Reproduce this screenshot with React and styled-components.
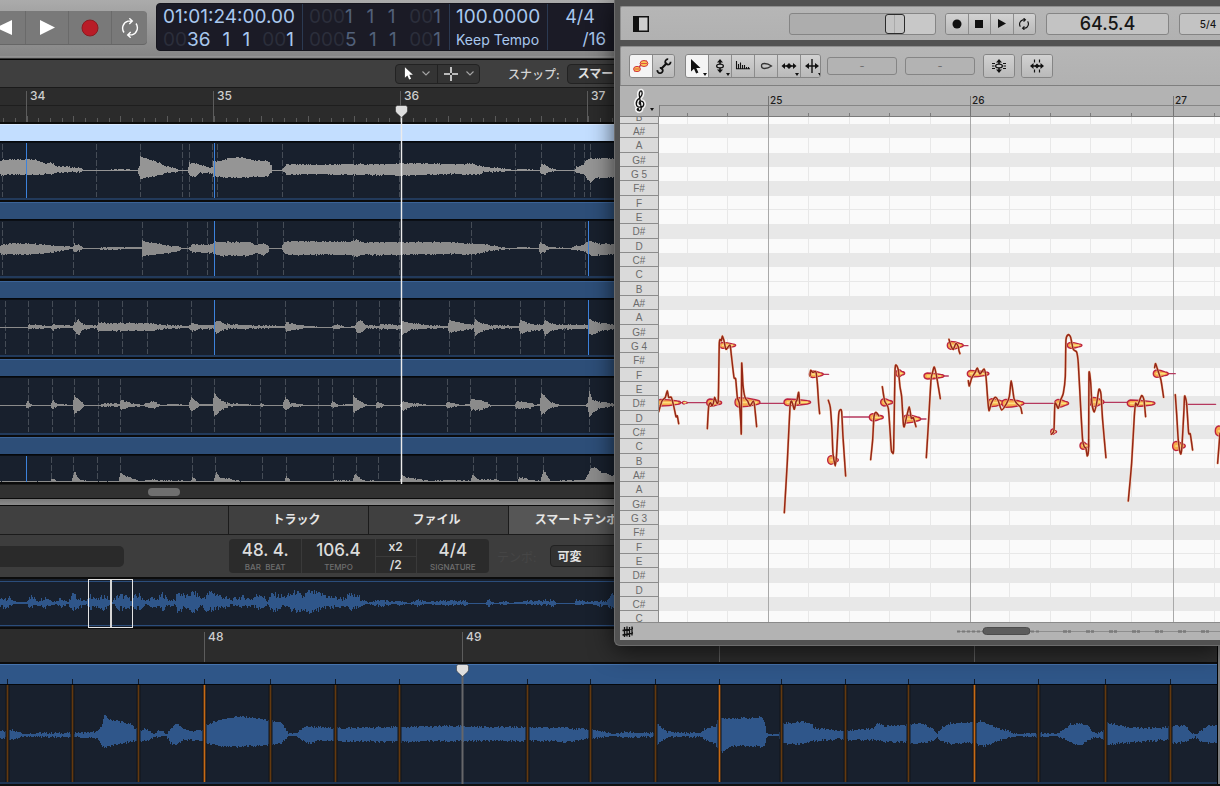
import React from 'react';
import styled, { createGlobalStyle, css } from 'styled-components';

const GlobalStyle = createGlobalStyle`
  * {
    box-sizing: border-box;
  }

  body {
    margin: 0;
    overflow: hidden;
    background: #101010;
    font-family: Inter, 'Noto Sans CJK JP', sans-serif;
  }

  button,
  input,
  select {
    margin: 0;
    padding: 0;
    border: 0;
    background: none;
    color: inherit;
    font: inherit;
  }
`;

/* ---------- data ---------- */

// every point is [x, height above the axis, height below the axis]
const TRACKS = [
  {
    name: 'Track 1',
    height: 78,
    axis: 27,
    selected: true,
    color: '#959595',
    dashes: [2, 96, 140, 182, 189, 212, 217, 282, 353, 399, 515, 541, 574, 584, 590],
    flex: [26, 214],
    wave: [
      [0, 10, 5], [26, 11, 5], [35, 11, 5], [45, 7, 4], [51, 8, 4], [56, 4, 3], [70, 3, 2], [81, 2, 2],
      [83, 0, 1], [105, 0, 1], [120, 1, 1], [137, 0, 1], [139, 4, 6], [140, 14, 9], [150, 10, 7], [160, 7, 5],
      [165, 4, 3], [175, 2, 2], [178, 0, 1], [187, 0, 1], [189, 7, 5], [194, 7, 7], [200, 5, 3], [210, 2, 3],
      [212, 3, 4], [213, 9, 7], [220, 9, 7], [228, 12, 8], [240, 13, 8], [255, 10, 7], [267, 9, 7], [271, 5, 3],
      [272, 0, 1], [281, 0, 1], [284, 3, 3], [286, 6, 5], [310, 5, 4], [350, 6, 5], [390, 6, 5], [400, 7, 6],
      [450, 6, 4], [473, 6, 5], [480, 4, 4], [483, 3, 2], [500, 2, 2], [508, 1, 1], [512, 0, 1], [520, 1, 1],
      [539, 0, 1], [541, 7, 5], [545, 5, 5], [549, 2, 2], [560, 0, 1], [574, 0, 1], [576, 3, 3], [583, 5, 4],
      [586, 10, 8], [590, 12, 13], [595, 12, 8], [620, 12, 8],
    ],
  },
  {
    name: 'Track 2',
    height: 79,
    axis: 27,
    color: '#8b8b8b',
    dashes: [2, 73, 142, 187, 207, 257, 283, 353, 399, 471, 541, 585],
    flex: [214, 588],
    wave: [
      [0, 3, 6], [15, 5, 7], [40, 4, 6], [60, 2, 3], [72, 1, 1], [74, 4, 4], [79, 3, 3], [83, 0, 1],
      [98, 0, 1], [105, 1, 2], [125, 1, 1], [141, 1, 1], [142, 8, 9], [145, 6, 8], [160, 4, 6], [170, 2, 5],
      [178, 2, 3], [181, 0, 1], [188, 0, 1], [192, 4, 4], [205, 3, 5], [212, 4, 5], [215, 7, 7], [220, 6, 8],
      [235, 6, 8], [250, 6, 8], [256, 3, 5], [263, 5, 8], [268, 2, 4], [269, 0, 1], [281, 0, 1], [284, 6, 6],
      [290, 7, 7], [350, 6, 7], [356, 9, 9], [360, 6, 7], [400, 6, 7], [450, 6, 6], [470, 4, 7], [480, 4, 5],
      [490, 3, 3], [500, 1, 2], [510, 0, 1], [520, 1, 1], [538, 0, 1], [540, 6, 6], [545, 3, 4], [549, 1, 1],
      [570, 0, 1], [575, 2, 2], [583, 3, 3], [588, 7, 6], [592, 7, 8], [600, 4, 7], [620, 4, 7],
    ],
  },
  {
    name: 'Track 3',
    height: 78,
    axis: 27,
    color: '#8b8b8b',
    dashes: [5, 28, 52, 75, 98, 122, 147, 191, 285, 333, 356, 379, 399, 449, 474, 520, 544, 564],
    flex: [214, 588],
    wave: [
      [0, 0, 1], [27, 0, 1], [29, 3, 2], [50, 1, 1], [53, 3, 3], [60, 2, 1], [72, 1, 1], [74, 4, 4],
      [78, 8, 9], [82, 3, 3], [96, 1, 1], [98, 5, 4], [105, 4, 4], [150, 4, 4], [155, 3, 3], [165, 2, 2],
      [188, 1, 1], [192, 4, 4], [200, 2, 2], [213, 2, 2], [216, 7, 7], [225, 3, 2], [245, 2, 2], [280, 1, 1],
      [284, 1, 1], [286, 5, 5], [292, 3, 3], [305, 1, 1], [330, 0, 1], [336, 3, 2], [345, 0, 1], [354, 1, 1],
      [357, 6, 6], [361, 6, 5], [366, 2, 2], [378, 1, 1], [380, 3, 2], [400, 2, 2], [402, 6, 8], [410, 4, 3],
      [425, 2, 2], [447, 1, 1], [449, 7, 6], [460, 4, 4], [473, 2, 2], [475, 8, 9], [480, 4, 5], [490, 2, 2],
      [518, 1, 1], [520, 7, 7], [530, 3, 4], [542, 2, 3], [545, 7, 9], [550, 4, 4], [560, 2, 2], [587, 2, 2],
      [589, 8, 7], [592, 7, 8], [600, 4, 4], [620, 2, 2],
    ],
  },
  {
    name: 'Track 4',
    height: 78,
    axis: 27,
    color: '#8b8b8b',
    dashes: [28, 52, 74, 98, 120, 191, 214, 260, 285, 318, 332, 353, 376, 447, 470, 515, 541, 589],
    flex: [],
    wave: [
      [0, 0, 1], [25, 0, 1], [27, 4, 3], [32, 0, 1], [50, 0, 1], [52, 5, 4], [58, 1, 1], [72, 0, 1],
      [74, 10, 9], [80, 4, 5], [84, 0, 1], [100, 0, 1], [105, 2, 2], [119, 1, 1], [121, 5, 5], [130, 2, 2],
      [142, 0, 1], [150, 3, 3], [155, 3, 3], [160, 0, 1], [173, 1, 1], [188, 0, 1], [191, 8, 6], [195, 4, 4],
      [200, 1, 1], [212, 1, 1], [214, 12, 12], [220, 5, 6], [226, 2, 2], [240, 1, 1], [259, 0, 1], [261, 2, 2],
      [265, 0, 1], [282, 0, 1], [285, 8, 6], [290, 2, 2], [305, 0, 1], [330, 0, 1], [332, 4, 3], [338, 0, 1],
      [352, 1, 1], [353, 10, 8], [360, 3, 3], [368, 0, 1], [375, 0, 1], [377, 3, 3], [385, 0, 1], [399, 0, 1],
      [403, 4, 6], [410, 2, 2], [430, 0, 1], [445, 0, 1], [447, 3, 3], [460, 0, 1], [469, 1, 1], [471, 6, 5],
      [480, 5, 5], [492, 0, 1], [514, 0, 1], [516, 4, 4], [530, 2, 3], [535, 0, 1], [539, 1, 1], [541, 13, 11],
      [550, 3, 3], [560, 0, 1], [585, 0, 1], [587, 2, 2], [589, 14, 13], [592, 6, 8], [600, 3, 3], [620, 1, 1],
    ],
  },
  {
    name: 'Track 5',
    height: 47,
    axis: 26,
    color: '#8b8b8b',
    dashes: [51, 73, 97, 120, 192, 215, 262, 286, 333, 356, 378, 473, 496, 517, 543, 590],
    flex: [26],
    wave: [
      [0, 1, 0], [50, 1, 0], [52, 4, 0], [56, 1, 0], [71, 1, 0], [74, 11, 0], [79, 2, 0], [90, 1, 0],
      [118, 1, 0], [120, 9, 0], [130, 4, 0], [140, 1, 0], [150, 2, 0], [190, 1, 0], [192, 5, 0], [197, 1, 0],
      [213, 1, 0], [216, 10, 0], [220, 4, 0], [230, 3, 0], [240, 1, 0], [284, 1, 0], [286, 6, 0], [290, 1, 0],
      [330, 1, 0], [335, 2, 0], [352, 1, 0], [355, 9, 0], [361, 2, 0], [378, 1, 0], [399, 1, 0], [402, 6, 0],
      [415, 3, 0], [430, 1, 0], [450, 2, 0], [470, 1, 0], [472, 7, 0], [480, 2, 0], [496, 3, 0], [500, 1, 0],
      [517, 1, 0], [519, 5, 0], [530, 2, 0], [540, 1, 0], [543, 13, 0], [550, 1, 0], [585, 2, 0], [590, 13, 0],
      [594, 16, 0], [602, 9, 0], [620, 5, 0],
    ],
  },
];

const OVERVIEW_WAVE = [
  [0, 4, 4], [8, 5, 4], [16, 1, 1], [26, 1, 1], [29, 7, 4], [38, 2, 2], [45, 6, 4], [55, 1, 1], [60, 5, 4],
  [68, 1, 1], [72, 9, 8], [78, 4, 4], [86, 2, 2], [90, 8, 7], [97, 3, 3], [103, 7, 6], [112, 2, 1], [119, 8, 6],
  [130, 4, 4], [139, 8, 6], [145, 2, 2], [152, 5, 4], [157, 3, 3], [162, 9, 6], [168, 3, 3], [175, 3, 3],
  [177, 11, 8], [186, 6, 5], [193, 11, 8], [202, 4, 3], [206, 8, 7], [211, 11, 7], [222, 6, 5], [231, 3, 2],
  [240, 6, 4], [251, 4, 3], [260, 9, 7], [267, 2, 2], [272, 9, 9], [283, 6, 4], [290, 8, 6], [296, 11, 8],
  [302, 6, 6], [308, 11, 10], [320, 9, 6], [330, 6, 5], [342, 4, 3], [350, 8, 6], [358, 6, 4], [365, 2, 1],
  [368, 0, 1], [372, 2, 2], [382, 3, 3], [393, 1, 1], [400, 2, 2], [408, 0, 1], [418, 3, 3], [426, 1, 1],
  [440, 2, 2], [465, 2, 2], [468, 0, 1], [485, 0, 1], [488, 3, 3], [494, 0, 1], [505, 2, 2], [510, 0, 1],
  [525, 2, 1], [540, 2, 2], [553, 3, 3], [556, 0, 1], [574, 0, 1], [576, 3, 2], [590, 1, 1], [600, 3, 3],
  [606, 1, 2], [613, 8, 7], [640, 5, 5],
];

const EDITOR_WAVE = [
  [0, 5, 4], [6, 3, 3], [8, 6, 5], [20, 3, 3], [24, 1, 1], [40, 2, 2], [71, 2, 2], [97, 3, 3], [101, 9, 10],
  [104, 20, 13], [109, 16, 11], [119, 14, 9], [130, 11, 7], [136, 6, 6], [139, 5, 6], [146, 6, 6], [154, 1, 2],
  [160, 5, 2], [166, 1, 1], [170, 6, 8], [176, 12, 11], [182, 7, 5], [190, 4, 5], [203, 5, 6], [206, 10, 8],
  [221, 16, 11], [237, 19, 12], [257, 17, 11], [273, 14, 10], [281, 12, 9], [285, 6, 4], [288, 1, 1],
  [296, 2, 1], [304, 8, 6], [308, 9, 9], [316, 8, 6], [336, 7, 6], [400, 8, 7], [450, 9, 6], [500, 8, 6],
  [530, 8, 6], [550, 7, 6], [567, 8, 7], [575, 6, 6], [585, 6, 4], [600, 4, 3], [612, 1, 1], [626, 3, 3],
  [640, 2, 2], [654, 2, 2], [657, 11, 10], [663, 6, 5], [668, 3, 2], [690, 2, 2], [700, 2, 2], [704, 6, 4],
  [715, 9, 9], [717, 15, 13], [722, 17, 18], [728, 17, 12], [740, 17, 11], [762, 18, 12], [764, 14, 12],
  [766, 3, 3], [768, 1, 1], [778, 1, 1], [780, 4, 5], [782, 12, 9], [790, 12, 9], [802, 14, 9], [812, 11, 7],
  [813, 7, 6], [830, 6, 5], [844, 4, 4], [846, 5, 5], [873, 6, 5], [876, 12, 6], [885, 9, 7], [908, 10, 7],
  [910, 11, 9], [922, 12, 8], [932, 6, 6], [937, 2, 3], [942, 8, 7], [950, 12, 9], [970, 13, 8], [975, 12, 8],
  [980, 14, 11], [985, 12, 11], [1000, 6, 5], [1011, 3, 2], [1018, 1, 1], [1038, 2, 2], [1056, 1, 1],
  [1062, 4, 3], [1070, 11, 8], [1080, 12, 10], [1088, 9, 6], [1093, 2, 3], [1098, 2, 2], [1104, 6, 5],
  [1107, 13, 11], [1113, 11, 9], [1125, 8, 8], [1150, 7, 6], [1168, 8, 5], [1170, 9, 9], [1185, 10, 7],
  [1190, 3, 4], [1195, 1, 2], [1200, 4, 7], [1208, 10, 8], [1230, 11, 8],
];

const EDITOR_BARS = [
  { label: '48', width: 258 },
  { label: '49', width: 257 },
  { label: '50', width: 255 },
  { label: '51', width: 260 },
];

const BEATS = [7, 72, 138, 270, 335, 399, 527, 590, 655, 781, 845, 908, 1038, 1105, 1170];
const DOWNBEATS = [204, 719, 974];

const NOTE_NAMES = ['B', 'A#', 'A', 'G#', 'G', 'F#', 'F', 'E', 'D#', 'D', 'C#', 'C'];
const KEYS = [5, 4, 3].flatMap((octave) =>
  NOTE_NAMES.map((name) => ({
    id: `${name}${octave}`,
    name: name === 'G' ? `G ${octave}` : name,
    sharp: name.includes('#'),
    edge: name === 'F' || name === 'C',
  })),
);

// [start, end, y, thickness]
const BLOBS = [
  [22, 92, 248, 20], [97, 112, 248, 8], [170, 215, 248, 22], [208, 257, 76, 18], [255, 330, 247, 28],
  [402, 482, 247, 20], [478, 520, 163, 20], [533, 565, 420, 26], [658, 700, 292, 22], [692, 728, 247, 22],
  [738, 764, 160, 22], [760, 812, 297, 24], [822, 882, 168, 18], [892, 940, 76, 24], [952, 1017, 161, 20],
  [1015, 1062, 248, 24], [1056, 1122, 250, 24], [1214, 1256, 250, 24], [1202, 1220, 335, 16],
  [1252, 1296, 76, 18], [1290, 1318, 377, 22], [1320, 1362, 246, 28], [1432, 1515, 250, 20],
  [1510, 1555, 161, 22], [1568, 1606, 378, 28], [1696, 1740, 333, 30],
];

const TAILS = [
  [90, 185, 248], [325, 420, 250], [515, 536, 163], [575, 662, 291], [808, 828, 297], [880, 895, 168],
  [938, 954, 77], [1118, 1210, 250], [1360, 1440, 247], [1552, 1576, 161], [1606, 1697, 253],
];

const CURVES = [
  [26, 275, 36, 243, 46, 232, 52, 212, 56, 232, 64, 232, 72, 262, 78, 290, 82, 288, 86, 311],
  [172, 326, 176, 260, 182, 248, 186, 258, 190, 250, 194, 232, 200, 248, 205, 238, 208, 68, 214, 62, 217, 48,
    222, 62, 228, 88, 240, 75, 244, 105, 252, 172, 257, 177, 262, 232, 268, 250, 272, 300, 274, 338, 275, 131,
    279, 195, 285, 232, 293, 243, 300, 258, 310, 243, 314, 260, 320, 320],
  [403, 578, 412, 425, 420, 262, 424, 243, 428, 252, 433, 268, 438, 245, 441, 240, 446, 217, 449, 250],
  [480, 168, 482, 151, 488, 157, 498, 156, 502, 190, 506, 250, 509, 281],
  [535, 241, 541, 262, 546, 330, 549, 400, 556, 438, 560, 400, 566, 285, 570, 270, 575, 275, 579, 350, 587, 468],
  [662, 419, 668, 360, 672, 290, 678, 277, 687, 288],
  [697, 200, 704, 243, 715, 265, 720, 330, 724, 390, 727, 397, 731, 385, 735, 155, 739, 136, 745, 150, 750, 200,
    755, 230, 760, 310, 763, 320, 770, 290, 778, 261, 784, 295, 790, 293, 798, 320],
  [829, 413, 836, 300, 843, 180, 847, 160, 853, 141, 860, 170, 871, 236],
  [897, 58, 904, 80, 910, 88, 918, 70, 925, 80, 927, 92, 930, 101],
  [955, 182, 958, 198, 965, 175, 975, 158, 982, 144, 990, 162, 1002, 147, 1008, 170, 1013, 235, 1017, 272,
    1024, 250, 1036, 232, 1045, 243, 1055, 270, 1070, 250, 1078, 230, 1084, 183, 1092, 235, 1100, 250, 1112, 262,
    1116, 280],
  [1204, 343, 1212, 330, 1215, 250, 1225, 265, 1232, 240, 1240, 220, 1246, 170, 1248, 60, 1255, 44, 1262, 52,
    1270, 88, 1280, 96, 1285, 130, 1292, 260, 1298, 360, 1303, 380, 1308, 385, 1312, 408, 1316, 380, 1317, 162,
    1322, 185, 1326, 250, 1333, 276, 1340, 250, 1347, 208, 1353, 222, 1358, 300, 1368, 413],
  [1435, 543, 1445, 430, 1453, 290, 1457, 250, 1463, 256, 1475, 227, 1482, 240, 1487, 290],
  [1514, 143, 1517, 131, 1525, 155, 1533, 180, 1541, 232],
  [1576, 224, 1580, 280, 1585, 360, 1592, 402, 1596, 380, 1602, 270, 1604, 228, 1610, 250, 1616, 338, 1621, 342,
    1628, 390],
  [1703, 430, 1707, 380, 1710, 340],
];

const PITCH_BARS = [
  { label: '25', width: 202 },
  { label: '26', width: 203 },
  { label: '27', width: 203 },
];
const PITCH_BAR_LINES = [109, 311, 514];
const PITCH_BEAT_LINES = [28, 68, 149, 190, 230, 271, 350, 391, 431, 472, 555];

/* ---------- waveform ---------- */

// small fixed noise so that the outline is the same on every render
const noise = (n) => {
  const v = Math.sin(n * 12.9898) * 43758.5453;
  return v - Math.floor(v);
};

const wavePath = (points, axis, grain = 1.4) => {
  let d = '';
  let i = 0;
  const last = points[points.length - 1][0];
  for (let x = 0; x < last; x += 1) {
    while (points[i + 1][0] <= x) i += 1;
    const [x0, u0, l0] = points[i];
    const [x1, u1, l1] = points[i + 1];
    const t = (x - x0) / (x1 - x0);
    const up = u0 + (u1 - u0) * t;
    const low = l0 + (l1 - l0) * t;
    const top = Math.round(up * 0.98 + (noise(x + axis) - 0.5) * Math.min(up, grain));
    const bottom = Math.round(low * 0.98 + (noise(x * 3 + axis) - 0.5) * Math.min(low, grain));
    d += `M${x + 0.5} ${axis - top}V${axis + Math.max(bottom, 1)}`;
  }
  return d;
};

// soft curve that runs through every point of the list
const smooth = (p) => {
  const at = (i) => {
    const n = Math.max(0, Math.min(p.length - 2, i));
    return [p[n], p[n + 1]];
  };
  let d = `M${p[0]} ${p[1]}`;
  for (let i = 0; i < p.length - 2; i += 2) {
    const [ax, ay] = at(i - 2);
    const [bx, by] = at(i);
    const [cx, cy] = at(i + 2);
    const [dx, dy] = at(i + 4);
    const k = 0.11;
    d += `C${bx + (cx - ax) * k} ${by + (cy - ay) * k} ${cx - (dx - bx) * k} ${cy - (dy - by) * k} ${cx} ${cy}`;
  }
  return d;
};

const Drawing = styled.svg`
  display: block;
  overflow: hidden;
`;

const Overlay = styled.svg`
  position: absolute;
  top: 0;
  left: 0;
  width: 100%;
  height: 100%;
  pointer-events: none;
`;

/* ---------- sequencer window ---------- */

const Desktop = styled.div`
  position: relative;
  min-height: 100vh;
  overflow: hidden;
`;

const ControlBar = styled.header`
  display: flex;
  gap: 9px;
  height: 60px;
  padding-top: 3px;
  overflow: hidden;
  background: linear-gradient(#ababab, #868686 56px, #a0a0a0 57px, #707070 58px, #000 59px);
`;

const Transport = styled.div`
  display: flex;
  flex: none;
  height: 33px;
  margin: 8px 0 0 -18px;
  border-radius: 4px;
  background: #797979;
  box-shadow: 0 1px 0 #666;
`;

const TransportButton = styled.button`
  display: flex;
  flex: 0 0 ${({ $narrow }) => ($narrow ? 36 : 43)}px;
  align-items: center;
  justify-content: center;
  color: #fff;

  & + & {
    border-left: 1px solid #6a6a6a;
  }
`;

const Lcd = styled.div`
  display: flex;
  flex: 1;
  height: 48px;
  border: 1px solid #15151d;
  border-radius: 4px;
  background: #1b1b26;
  color: #a9c8ee;
`;

const LcdCell = styled.div`
  display: flex;
  flex: none;
  flex-direction: column;
  width: ${({ $width }) => $width}px;
  padding: 1px 8px 0 6px;
  border-right: ${({ $last }) => ($last ? '0' : '1px solid #2b3a52')};
  color: ${({ $muted }) => ($muted ? '#52617a' : 'inherit')};
`;

const LcdLine = styled.div`
  display: flex;
  justify-content: ${({ $align }) => $align || 'space-between'};
  font-size: ${({ $size }) => $size || 19}px;
  line-height: 23px;
  white-space: nowrap;
`;

const Dim = styled.span`
  color: #2b2e3b;
`;

const MenuBar = styled.div`
  display: flex;
  align-items: center;
  height: 28px;
  padding-left: 395px;
  border-bottom: 1px solid #1a1a1a;
  background: #3f3f3f;
`;

const ToolGroup = styled.div`
  display: flex;
  width: 85px;
  height: 20px;
  margin-right: 28px;
  border: 1px solid #222;
  border-radius: 4px;
  background: #343434;
`;

const ToolButton = styled.button`
  display: flex;
  flex: 1;
  align-items: center;
  justify-content: center;
  gap: 8px;

  & + & {
    border-left: 1px solid #222;
  }
`;

const SelectLabel = styled.label`
  display: flex;
  align-items: center;
  gap: ${({ $faint }) => ($faint ? 14 : 7)}px;
  color: ${({ $faint }) => ($faint ? '#464646' : '#d4d4d4')};
  font-size: 12px;
  font-weight: ${({ $faint }) => ($faint ? 400 : 500)};
  white-space: nowrap;
`;

const Select = styled.select`
  appearance: none;
  width: 130px;
  height: ${({ $tall }) => ($tall ? 22 : 20)}px;
  padding-left: ${({ $tall }) => ($tall ? 6 : 10)}px;
  border: 1px solid #222;
  border-radius: 4px;
  background: #323232;
  color: #e2e2e2;
  font-size: 12px;
  font-weight: 700;
`;

const Ruler = styled.div`
  position: relative;
  display: flex;
  height: ${({ $height }) => $height}px;
  padding-left: ${({ $start }) => $start}px;
  overflow: hidden;
  border-bottom: 2px solid #0c0c0c;
  background: ${({ $split }) =>
    $split ? 'linear-gradient(#2c2c2c 17px, #1e1e1e 17px, #1e1e1e 18px, #2b2b2b 18px)' : '#2c2c2c'};
`;

const BarMark = styled.div`
  flex: 0 0 ${({ $width }) => $width}px;
  margin-top: 3px;
  padding-left: 3px;
  border-left: 1px solid #5c5c5c;
  color: #cfcfcf;
  font-size: 12px;
  font-weight: 500;
  line-height: 10px;
`;

const Arrange = styled.section`
  position: relative;
`;

const Track = styled.div`
  height: ${({ $height }) => $height}px;
  overflow: hidden;
  border-bottom: 2px solid #0b0b0b;
  background: #182029;
`;

const RegionTitle = styled.div`
  height: 18px;
  border-top: 1px solid #3b6397;
  border-bottom: 1px solid #05080c;
  background: #2d4e78;

  ${({ $selected }) =>
    $selected &&
    css`
      border-top-color: #d8e9ff;
      background: #c3deff;
    `}
`;

const RegionBody = styled.div`
  height: 58px;
  border-top: 1px solid #0b0f15;
  border-bottom: 2px solid #223a5b;
  background: #18202d;
`;

const Playhead = styled.div`
  position: absolute;
  top: ${({ $top }) => $top}px;
  bottom: 0;
  left: ${({ $left }) => $left}px;
  width: 13px;
`;

const ScrollStrip = styled.div`
  height: 15px;
  padding: 3px 0 0 148px;
  border-top: 1px solid #1c1c1c;
  border-bottom: 1px solid #0a0a0a;
  background: #303030;
`;

const ScrollThumb = styled.div`
  width: 32px;
  height: 8px;
  border-radius: 4px;
  background: #6f6f6f;
`;

const Splitter = styled.div`
  height: 7px;
  border-bottom: 1px solid #0a0a0a;
  background: linear-gradient(#777, #8c8c8c);
`;

const Tabs = styled.nav`
  display: flex;
  height: 29px;
  padding-left: 228px;
  border-bottom: 1px solid #1b1b1b;
  background: #404040;
`;

const Tab = styled.button`
  flex: 0 0 140px;
  padding: 0 4px 3px 0;
  border-left: 1px solid #1b1b1b;
  background: ${({ $active }) => ($active ? '#565656' : 'transparent')};
  color: #e6e6e6;
  font-size: 12px;
  font-weight: 700;
  white-space: nowrap;
`;

const Inspector = styled.div`
  display: flex;
  align-items: center;
  height: 44px;
  border-bottom: 2px solid #0c0c0c;
  background: #3d3d3d;
`;

const NameField = styled.input`
  width: 124px;
  height: 21px;
  margin-right: 105px;
  border-radius: 0 5px 5px 0;
  background: #2a2a2a;
`;

const Meter = styled.div`
  display: flex;
  width: 260px;
  height: 34px;
  margin-right: 8px;
  overflow: hidden;
  border-radius: 4px;
  background: #2b2b2b;
`;

const MeterCell = styled.div`
  display: flex;
  flex: ${({ $narrow }) => ($narrow ? '0 0 41px' : '1')};
  flex-direction: column;
  align-items: center;
  color: #dcdcdc;
  font-size: 17px;
  font-weight: 500;
  line-height: 22px;
  white-space: pre;

  & + & {
    border-left: 1px solid #3a3a3a;
  }

  small {
    color: #6f6f6f;
    font-size: 8px;
    font-weight: 500;
    line-height: 12px;
  }
`;

const StepButton = styled.button`
  flex: 1;
  width: 100%;
  color: #dcdcdc;
  font-size: 12px;
  font-weight: 600;
  line-height: 16px;

  & + & {
    border-top: 1px solid #3a3a3a;
  }
`;

const Overview = styled.div`
  position: relative;
  height: 50px;
  padding-top: 2px;
  border-bottom: 2px solid #0c0c0c;
  background: #18202d;
`;

const OverviewBody = styled.div`
  height: 45px;
  border-top: 1px solid #2b4d7b;
  border-bottom: 1px solid #2b4d7b;
`;

const OverviewWindow = styled.div`
  position: absolute;
  top: 0;
  left: 88px;
  width: 45px;
  height: 49px;
  border: 1px solid #e4e4e4;
  background: linear-gradient(90deg, transparent 21px, #d6d6d6 21px, #d6d6d6 23px, transparent 23px);
`;

const Editor = styled.section`
  position: relative;
  border-right: 1px solid #000;
`;

const EditorTitle = styled.div`
  height: 21px;
  border-top: 1px solid #4673ad;
  border-bottom: 1px solid #05080c;
  background: #2f5688;
`;

const EditorBody = styled.div`
  height: 99px;
  border-bottom: 2px solid #203654;
  background: #18202d;
`;

const EditorFrame = styled.div`
  padding-right: 2px;
  background: #7d7d7d;
`;

/* ---------- pitch editor window ---------- */

const PitchWindow = styled.section`
  position: absolute;
  top: 0;
  left: 614px;
  right: 0;
  padding: 6px 0 5px 5px;
  overflow: hidden;
  border-left: 1px solid #6c6c6c;
  border-bottom: 1px solid #6c6c6c;
  border-radius: 0 0 0 6px;
  background: #525252;
  box-shadow: 0 4px 24px rgba(0, 0, 0, 0.65);
  color: #161616;
`;

const Panel = styled.div`
  display: flex;
  align-items: center;
  height: ${({ $height }) => $height}px;
  margin-bottom: ${({ $gap }) => $gap || 0}px;
  padding-left: ${({ $indent }) => $indent}px;
  overflow: hidden;
  border-top: 1px solid #8f8f8f;
  border-left: 1px solid #8f8f8f;
  border-radius: 2px 0 0 0;
  background: linear-gradient(#b6b6b6, #b1b1b1);
`;

const IconButton = styled.button`
  display: flex;
  margin-right: 140px;
`;

const boxed = css`
  border: 1px solid #858585;
  border-radius: 3px;
`;

const Position = styled.input.attrs({ type: 'range' })`
  ${boxed}
  appearance: none;
  flex: none;
  width: 147px;
  height: 22px;
  background: linear-gradient(90deg, #adadad 106px, #c8c8c8 106px);

  &::-webkit-slider-thumb {
    appearance: none;
    width: 20px;
    height: 20px;
    border: 1px solid #2b2b2b;
    border-radius: 3px;
    background: linear-gradient(90deg, #c4c4c4 8px, #a9a9a9 8px, #a9a9a9 9px, #c4c4c4 9px);
  }
`;

const ButtonGroup = styled.div`
  ${boxed}
  display: flex;
  flex: none;
  width: ${({ $width }) => $width}px;
  height: ${({ $height }) => $height || 24}px;
  margin: 0 ${({ $after }) => $after || 10}px 0 ${({ $before }) => $before || 0}px;
  overflow: hidden;
`;

const GroupButton = styled.button`
  display: flex;
  flex: 1 1 0;
  align-items: center;
  justify-content: center;
  background: ${({ $on }) => ($on ? '#f4f4f4' : 'linear-gradient(#d2d2d2, #b9b9b9)')};

  & + & {
    border-left: 1px solid #8c8c8c;
  }
`;

const Readout = styled.output`
  ${boxed}
  flex: none;
  width: ${({ $width }) => $width}px;
  height: 22px;
  margin-right: 10px;
  background: #c3c3c3;
  font-size: ${({ $small }) => ($small ? 10 : 18)}px;
  font-weight: 500;
  line-height: 20px;
  text-align: center;
`;

const ValueField = styled.input`
  ${boxed}
  flex: none;
  width: 70px;
  height: 18px;
  margin-right: 8px;
  background: #b3b3b3;
  color: #6e6e6e;
  font-size: 11px;
  text-align: center;
`;

const PitchRuler = styled.div`
  display: flex;
  height: 32px;
  overflow: hidden;
  border-top: 1px solid #7f7f7f;
  border-bottom: 1px solid #7a7a7a;
  background: #b3b3b3;
`;

const ClefButton = styled.button`
  display: flex;
  flex: 0 0 39px;
  justify-content: flex-end;
`;

const PitchScale = styled.div`
  position: relative;
  display: flex;
  flex: 1;
  padding-left: 109px;
  overflow: hidden;
  background: linear-gradient(transparent 19px, #868686 19px, #868686 20px, transparent 20px);
`;

const PitchBar = styled.div`
  flex: 0 0 ${({ $width }) => $width}px;
  margin-top: 10px;
  padding-left: 1px;
  border-left: 1px solid #757575;
  color: #1c1c1c;
  font-size: 10px;
  font-weight: 500;
  line-height: 9px;
`;

const NoteArea = styled.div`
  position: relative;
  height: 505px;
  overflow: hidden;
  background: #fafafa;
`;

const NoteRows = styled.div`
  margin-top: -7px;
`;

const NoteRow = styled.div`
  display: flex;
  height: 14px;

  &:nth-child(3n) {
    height: 15px;
  }
`;

const Key = styled.div`
  flex: 0 0 39px;
  border-right: 1px solid #8c8c8c;
  border-bottom: 1px solid #8c8c8c;
  background: #dadada;
  color: #6b6b6b;
  font-family: 'Liberation Sans', sans-serif;
  font-size: 10px;
  line-height: 16px;
  text-align: center;
`;

const Lane = styled.div`
  flex: 1;
  border-bottom: ${({ $edge }) => ($edge ? '1px solid #e8e8e8' : '0')};
  background: ${({ $sharp }) => ($sharp ? '#e8e8e8' : '#fafafa')};
`;

const NoteCanvas = styled.div`
  position: absolute;
  inset: 0 0 0 39px;
`;

const StatusBar = styled.div`
  display: flex;
  align-items: center;
  height: 18px;
  overflow: hidden;
  border-top: 1px solid #8a8a8a;
  background: #b3b3b3;
`;

/* ---------- icons ---------- */

const CycleIcon = ({ size, width }) => (
  <svg width={size} height={size} viewBox="0 0 20 20" fill="none" stroke="currentColor" strokeWidth={width}>
    <path d="M4 14.5A7.4 7.4 0 0 1 8 3.1h4M9.3.3l3 2.8-3 2.9" />
    <path d="M16 5.5a7.4 7.4 0 0 1-4 11.4H8m2.7-2.9-3 2.9 3 2.8" />
  </svg>
);

const Chevron = () => (
  <svg width="8" height="5" viewBox="0 0 8 5" fill="none" stroke="#a5a5a5" strokeWidth="1.1">
    <path d="M.5.5 4 4 7.5.5" />
  </svg>
);

const Pointer = ({ color, size }) => (
  <svg width={size} height={size + 3} viewBox="0 0 11 14" fill={color}>
    <path d="M1 0v11.6l2.7-2.5 2 4.6 2.1-.9-2-4.5h4z" />
  </svg>
);

const Marker = ({ line, width }) => (
  <Overlay>
    <path d="M6.5 8V1000" stroke={line} strokeWidth={width} />
    <path
      d="M.5 2.5Q.5.5 2.5.5h8q2 0 2 2V6q0 1-1 2l-5 4.6L1.500 8Q.5 7 .5 6z"
      fill="#dedede"
      stroke="#222"
      strokeWidth=".5"
    />
  </Overlay>
);

const BeatLine = ({ x, color }) => (
  <g>
    <path d={`M${x + 0.5} 0V97`} stroke="#10151d" strokeWidth="4" />
    <path d={`M${x + 0.5} 0V97`} stroke={color} strokeWidth="1.7" />
  </g>
);

const TinyArrow = () => <path d="M17 18h4l-2 3z" />;

const PitchIcon = ({ children }) => (
  <svg width="22" height="22" viewBox="0 0 22 22" fill="#111" stroke="none">
    {children}
  </svg>
);

const BlobIcon = () => (
  <PitchIcon>
    <path d="M4 16Q9 15 10 11T17 6" fill="none" stroke="#b5222f" strokeWidth="1.2" />
    <ellipse cx="7" cy="14" rx="3.4" ry="2.6" fill="#f8c552" stroke="#d3343c" />
    <ellipse cx="14" cy="8.5" rx="3.9" ry="3" fill="#f8c552" stroke="#d3343c" />
    <path d="M4.5 14h5M11 8.5h6" stroke="#e5503f" />
  </PitchIcon>
);

const WrenchIcon = () => (
  <PitchIcon>
    <path d="M8 14 14 8" stroke="#111" strokeWidth="2.2" />
    <path
      d="M17.6 6.8a2.7 2.7 0 1 1-2.400-2.600M4.400 15.200a2.700 2.700 0 1 0 2.400-2.400"
      fill="none"
      stroke="#111"
      strokeWidth="1.8"
    />
  </PitchIcon>
);

const UpDownIcon = ({ sides }) => (
  <>
    <path d="M11 4 14 7.500H8zM11 18l3-3.500H8z" />
    <path d="M11 6v3m0 4v3" stroke="#111" strokeWidth="1.5" />
    <ellipse cx="11" cy="11" rx="3.4" ry="1.9" fill="#c8c8c8" stroke="#111" strokeWidth="1.2" />
    {sides && (
      <path
        d="M4 8.500h3M4 11h2.500M4 13.500h3M15 8.500h3M15.500 11H18M15 13.500h3"
        stroke="#111"
        strokeWidth="1.2"
      />
    )}
  </>
);

const Clef = () => (
  <svg width="38" height="30" viewBox="0 0 38 30" fill="none">
    {['#f2f2f2', '#111'].map((color, i) => (
      <g key={color} stroke={color} strokeWidth={i ? 1.3 : 4.5} strokeLinecap="round">
        <path d="M19.500 18.500c-1.800-.3-1.800-3.300.5-3.300 3.800 0 3.800 6-.7 6-4.800 0-5.300-5.600-1.600-8.500 3-2.500 4.200-4.400 3.200-7-.8-1.800-2.700-.4-2.700 2.800l2 13.500c.4 3.400-3.500 3.500-3.900 1.400" />
        <circle cx="17" cy="23.3" r=".6" />
      </g>
    ))}
    <path d="M29 22h4l-2 3z" fill="#111" />
  </svg>
);

/* ---------- app ---------- */

const Counter = ({ lead, value, tail }) => (
  <LcdLine>
    <span>
      <Dim>{lead}</Dim>
      {value}
    </span>
    <span>1</span>
    <span>1</span>
    <span>
      <Dim>00</Dim>
      {tail}
    </span>
  </LcdLine>
);

const RulerTicks = () => (
  <Overlay shapeRendering="crispEdges" stroke="#5a5a5a">
    {Array.from({ length: 106 }, (_, i) => {
      const x = Math.round(3.3 + i * 11.7) + 0.5;
      return <path key={x} d={`M${x} ${(i + 14) % 4 === 0 ? 28 : 30}V34`} />;
    })}
  </Overlay>
);

const TrackRow = ({ track }) => (
  <Track $height={track.height}>
    <RegionTitle $selected={track.selected} />
    <RegionBody>
      <Drawing width="100%" height="55" shapeRendering="crispEdges" role="img" aria-label={track.name}>
        {track.dashes.map((x) => (
          <path key={x} d={`M${x + 0.5} 1V54`} stroke="#454c56" strokeDasharray="6 2" />
        ))}
        <path d={wavePath(track.wave, track.axis)} stroke={track.color} />
        {track.flex.map((x) => (
          <path key={x} d={`M${x + 0.5} 0V55`} stroke="#3c82dc" />
        ))}
      </Drawing>
    </RegionBody>
  </Track>
);

const Sequencer = () => (
  <main>
    <ControlBar>
      <Transport>
        <TransportButton aria-label="Rewind">
          <svg width="16" height="15" viewBox="0 0 16 15" fill="#fff">
            <path d="M16 0v15L0 7.500z" />
          </svg>
        </TransportButton>
        <TransportButton aria-label="Play">
          <svg width="15" height="15" viewBox="0 0 15 15" fill="#fff">
            <path d="M0 0v15l15-7.500z" />
          </svg>
        </TransportButton>
        <TransportButton aria-label="Record">
          <svg width="18" height="18" viewBox="0 0 18 18">
            <circle cx="9" cy="9" r="8" fill="#b91c27" stroke="#8b1a20" />
          </svg>
        </TransportButton>
        <TransportButton $narrow aria-label="Cycle">
          <CycleIcon size={20} width={1.4} />
        </TransportButton>
      </Transport>
      <Lcd>
        <LcdCell $width={146}>
          <LcdLine>01:01:24:00.00</LcdLine>
          <Counter lead="00" value="36" tail="1" />
        </LcdCell>
        <LcdCell $width={147} $muted>
          <Counter lead="000" value="1" tail="1" />
          <Counter lead="000" value="5" tail="1" />
        </LcdCell>
        <LcdCell $width={98}>
          <LcdLine>100.0000</LcdLine>
          <LcdLine $size={14}>Keep Tempo</LcdLine>
        </LcdCell>
        <LcdCell $width={66} $last>
          <LcdLine $align="center" $size={18}>
            4/4
          </LcdLine>
          <LcdLine $align="flex-end" $size={17}>
            /16
          </LcdLine>
        </LcdCell>
      </Lcd>
    </ControlBar>

    <MenuBar>
      <ToolGroup>
        <ToolButton aria-label="Pointer tool">
          <Pointer color="#fff" size={10} />
          <Chevron />
        </ToolButton>
        <ToolButton aria-label="Marquee tool">
          <svg width="14" height="14" viewBox="0 0 14 14" stroke="#e6e6e6" strokeWidth="1.6">
            <path d="M7 0v6M7 8v6M0 7h6M8 7h6" />
          </svg>
          <Chevron />
        </ToolButton>
      </ToolGroup>
      <SelectLabel>
        スナップ:
        <Select defaultValue="smart">
          <option value="smart">スマート</option>
        </Select>
      </SelectLabel>
    </MenuBar>

    <Arrange>
      <Ruler $height={36} $start={26} $split>
        {['34', '35', '36', '37'].map((bar) => (
          <BarMark key={bar} $width={187}>
            {bar}
          </BarMark>
        ))}
        <RulerTicks />
      </Ruler>
      {TRACKS.map((track) => (
        <TrackRow key={track.name} track={track} />
      ))}
      <Playhead $top={17} $left={395}>
        <Marker line="#ececec" width={1.4} />
      </Playhead>
    </Arrange>
    <ScrollStrip>
      <ScrollThumb />
    </ScrollStrip>
    <Splitter />

    <Tabs>
      <Tab>トラック</Tab>
      <Tab>ファイル</Tab>
      <Tab $active>スマートテンポ</Tab>
    </Tabs>
    <Inspector>
      <NameField aria-label="Region name" />
      <Meter>
        <MeterCell>
          48. 4.
          <small>BAR  BEAT</small>
        </MeterCell>
        <MeterCell>
          106.4
          <small>TEMPO</small>
        </MeterCell>
        <MeterCell $narrow>
          <StepButton>x2</StepButton>
          <StepButton>/2</StepButton>
        </MeterCell>
        <MeterCell>
          4/4
          <small>SIGNATURE</small>
        </MeterCell>
      </Meter>
      <SelectLabel $faint>
        テンポ:
        <Select $tall defaultValue="variable">
          <option value="variable">可変</option>
        </Select>
      </SelectLabel>
    </Inspector>
    <Overview>
      <OverviewBody>
        <Drawing width="100%" height="43" shapeRendering="crispEdges" role="img" aria-label="Overview">
          <path d={wavePath(OVERVIEW_WAVE, 21, 6)} stroke="#2f568a" />
        </Drawing>
      </OverviewBody>
      <OverviewWindow />
    </Overview>
    <EditorFrame>
      <Editor>
        <Ruler $height={35} $start={204}>
          {EDITOR_BARS.map((bar) => (
            <BarMark key={bar.label} $width={bar.width}>
              {bar.label}
            </BarMark>
          ))}
        </Ruler>
        <EditorTitle>
          <Drawing width="100%" height="19" shapeRendering="crispEdges" stroke="#101a28">
            {[...BEATS, ...DOWNBEATS].map((x) => (
              <path key={x} d={`M${x + 0.5} 14V19`} />
            ))}
          </Drawing>
        </EditorTitle>
        <EditorBody>
          <Drawing width="100%" height="97" role="img" aria-label="Audio region">
            <path d={wavePath(EDITOR_WAVE, 50, 2.2)} stroke="#2f568a" shapeRendering="crispEdges" />
            {BEATS.map((x) => (
              <BeatLine key={x} x={x} color="#63390f" />
            ))}
            {DOWNBEATS.map((x) => (
              <BeatLine key={x} x={x} color="#c86a14" />
            ))}
          </Drawing>
        </EditorBody>
        <Playhead $top={35} $left={456}>
          <Marker line="#66676a" width={2} />
        </Playhead>
      </Editor>
    </EditorFrame>
  </main>
);

const Notes = () => (
  <NoteCanvas>
    <Overlay role="img" aria-label="Notes">
      <g shapeRendering="crispEdges">
        {PITCH_BEAT_LINES.map((x) => (
          <path key={x} d={`M${x + 0.5} 0V505`} stroke="#e8e8e8" />
        ))}
        {PITCH_BAR_LINES.map((x) => (
          <path key={x} d={`M${x + 0.5} 0V505`} stroke="#a9a9a9" />
        ))}
      </g>
      {/* note data is stored at three units to the pixel */}
      <g transform="translate(-9 203) scale(.3333)" fill="none" strokeLinecap="round" strokeLinejoin="round">
        {TAILS.map(([a, b, y]) => (
          <path key={`${a}-${y}`} d={`M${a} ${y}H${b}`} stroke="#b5385e" strokeWidth="4" />
        ))}
        {BLOBS.map(([a, b, y, h]) => {
          const s = Math.min(10, (b - a) / 3);
          const r = h / 2;
          return (
            <g key={`${a}-${y}`}>
              <path
                d={`M${a} ${y}Q${a} ${y - r * 0.8} ${a + s} ${y - r}Q${(a + b) / 2} ${y - r} ${b - s} ${
                  y - r * 0.5
                }Q${b} ${y - r * 0.4} ${b} ${y}Q${b} ${y + r * 0.4} ${b - s} ${y + r * 0.5}Q${(a + b) / 2} ${
                  y + r
                } ${a + s} ${y + r}Q${a} ${y + r * 0.8} ${a} ${y}z`}
                fill="#f7a84a"
                stroke="#bd2340"
                strokeWidth="4"
              />
              <path d={`M${a + s} ${y}H${b - s}`} stroke="#fbe07c" strokeWidth="5" />
            </g>
          );
        })}
        {CURVES.map((c) => (
          <g key={c[0]}>
            <path d={smooth(c)} stroke="#f3c4a4" strokeWidth="7" />
            <path d={smooth(c)} stroke="#962716" strokeWidth="4.5" />
          </g>
        ))}
      </g>
    </Overlay>
  </NoteCanvas>
);

const PitchEditor = () => (
  <PitchWindow>
    <Panel $height={34} $gap={6} $indent={12}>
      <IconButton aria-label="Toggle side panel">
        <svg width="16" height="16" viewBox="0 0 16 16">
          <path d="M.75.75h14.500v14.500H.75z" fill="#cfcfcf" stroke="#111" strokeWidth="1.5" />
          <path d="M1 1h5v14H1z" fill="#111" />
        </svg>
      </IconButton>
      <Position aria-label="Position" defaultValue="76" />
      <ButtonGroup $width={91} $height={22} $before={9}>
        <GroupButton aria-label="Record">
          <svg width="10" height="10" viewBox="0 0 10 10">
            <circle cx="5" cy="5" r="4.5" fill="#111" />
          </svg>
        </GroupButton>
        <GroupButton aria-label="Stop">
          <svg width="8" height="8" viewBox="0 0 8 8">
            <path d="M0 0h8v8H0z" fill="#111" />
          </svg>
        </GroupButton>
        <GroupButton aria-label="Play">
          <svg width="8" height="9" viewBox="0 0 8 9">
            <path d="M0 0v9l8-4.500z" fill="#111" />
          </svg>
        </GroupButton>
        <GroupButton aria-label="Cycle">
          <CycleIcon size={12} width={2} />
        </GroupButton>
      </ButtonGroup>
      <Readout $width={123} aria-label="Song position">
        64.5.4
      </Readout>
      <Readout $width={58} $small aria-label="Time signature">
        5/4
      </Readout>
    </Panel>

    <Panel $height={39} $indent={8}>
      <ButtonGroup $width={46}>
        <GroupButton $on aria-label="Note view">
          <BlobIcon />
        </GroupButton>
        <GroupButton aria-label="Settings">
          <WrenchIcon />
        </GroupButton>
      </ButtonGroup>
      <ButtonGroup $width={136} $after={6}>
        <GroupButton $on aria-label="Main tool">
          <PitchIcon>
            <path d="M5 4v12.500l3-2.700 2.100 4.700 2.300-1-2.100-4.600h4.200z" />
            <TinyArrow />
          </PitchIcon>
        </GroupButton>
        <GroupButton aria-label="Pitch tool">
          <PitchIcon>
            <UpDownIcon />
            <TinyArrow />
          </PitchIcon>
        </GroupButton>
        <GroupButton aria-label="Formant tool">
          <PitchIcon>
            <path
              d="M4.500 6v8M6.500 9v5M8.500 7.500V14M10.500 10v4M12.500 10v4M14.500 12v2M16.500 12v2M4 13.800h14"
              stroke="#111"
              strokeWidth="1.1"
            />
          </PitchIcon>
        </GroupButton>
        <GroupButton aria-label="Amplitude tool">
          <PitchIcon>
            <path
              d="M16.500 11q-3.500-2.500-7-2.500Q6.500 8.500 6.500 11t3 2.500q3.500 0 7-2.500z"
              fill="none"
              stroke="#333"
              strokeWidth="1.3"
            />
          </PitchIcon>
        </GroupButton>
        <GroupButton aria-label="Timing tool">
          <PitchIcon>
            <path d="M3.500 11 7 8v6zM18.500 11 15 8v6zM11 8l3 3-3 3-3-3z" />
            <path d="M5 11h12" stroke="#111" strokeWidth="1.6" />
            <TinyArrow />
          </PitchIcon>
        </GroupButton>
        <GroupButton aria-label="Separation tool">
          <PitchIcon>
            <path d="M4 11l4-3v6zM18 11l-4-3v6z" />
            <path d="M11 4v14M6 11h10" stroke="#111" strokeWidth="1.4" />
            <TinyArrow />
          </PitchIcon>
        </GroupButton>
      </ButtonGroup>
      <ValueField aria-label="Pitch" defaultValue="-" />
      <ValueField aria-label="Cents" defaultValue="-" />
      <ButtonGroup $width={32} $after={6}>
        <GroupButton aria-label="Correct pitch">
          <PitchIcon>
            <UpDownIcon sides />
          </PitchIcon>
        </GroupButton>
      </ButtonGroup>
      <ButtonGroup $width={32}>
        <GroupButton aria-label="Quantize time">
          <PitchIcon>
            <path d="M4 11l3.500-3v6zM18 11l-3.500-3v6zM11 8.500l2.500 2.500-2.500 2.500L8.500 11z" />
            <path d="M5 11h12" stroke="#111" strokeWidth="1.6" />
            <path d="M8.500 4.500v3M13.500 4.500v3M8.500 14.500v3M13.500 14.500v3" stroke="#111" strokeWidth="1.2" />
          </PitchIcon>
        </GroupButton>
      </ButtonGroup>
    </Panel>

    <PitchRuler>
      <ClefButton aria-label="Scale">
        <Clef />
      </ClefButton>
      <PitchScale>
        {PITCH_BARS.map((bar) => (
          <PitchBar key={bar.label} $width={bar.width}>
            {bar.label}
          </PitchBar>
        ))}
        <Overlay shapeRendering="crispEdges" stroke="#7c7c7c">
          <path d="M.5 19V31" />
          {PITCH_BEAT_LINES.map((x) => (
            <path key={x} d={`M${x + 0.5} 27V31`} />
          ))}
        </Overlay>
      </PitchScale>
    </PitchRuler>

    <NoteArea>
      <NoteRows>
        {KEYS.map((key) => (
          <NoteRow key={key.id}>
            <Key>{key.name}</Key>
            <Lane $sharp={key.sharp} $edge={key.edge} />
          </NoteRow>
        ))}
      </NoteRows>
      <Notes />
    </NoteArea>

    <StatusBar>
      <Drawing width="100%" height="17">
        <path
          d="M4.500 4v10M7 3.500v10M9.500 4v10M12 3.500v9M2.500 7.500 13 5.500M2.500 12 13 10"
          stroke="#111"
          strokeWidth="1.3"
        />
        <path d="M337 8.500H600" stroke="#8e8e8e" />
        <path d="M337 8.500h26M411 8.500h8" stroke="#7a7a7a" strokeWidth="2" strokeDasharray="3 2" />
        {[443, 466, 489, 512, 535, 558, 581].map((x) => (
          <path key={x} d={`M${x} 8.500h9`} stroke="#7a7a7a" strokeWidth="2.5" strokeDasharray="4 1 3 1" />
        ))}
        <rect x="363" y="4.5" width="47" height="7" rx="3.5" fill="#5c5c5c" stroke="#4c4c4c" />
      </Drawing>
    </StatusBar>
  </PitchWindow>
);

const App = () => (
  <>
    <GlobalStyle />
    <Desktop>
      <Sequencer />
      <PitchEditor />
    </Desktop>
  </>
);

export default App;
